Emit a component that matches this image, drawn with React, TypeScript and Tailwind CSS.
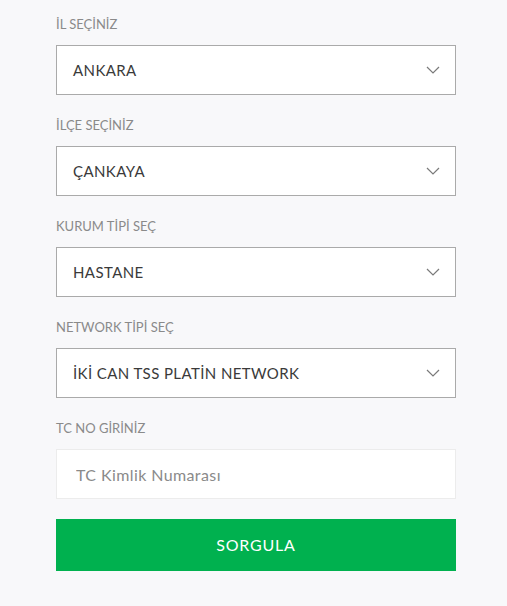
import React from "react";

const fields = [
  { label: "İL SEÇİNİZ", value: "ANKARA" },
  { label: "İLÇE SEÇİNİZ", value: "ÇANKAYA" },
  { label: "KURUM TİPİ SEÇ", value: "HASTANE" },
  { label: "NETWORK TİPİ SEÇ", value: "İKİ CAN TSS PLATİN NETWORK" },
];

function Chevron() {
  return (
    <svg width="14" height="8" viewBox="0 0 14 8" fill="none" className="shrink-0">
      <path d="M1 1l6 6 6-6" stroke="#7a7a7a" strokeWidth="1.2" />
    </svg>
  );
}

export default function App() {
  return (
    <div className="min-h-[606px] bg-[#f8f8fa] font-['Lato',sans-serif] pt-[15px]">
      <div className="w-[400px] ml-[56px] flex flex-col">
        {fields.map((f) => (
          <div key={f.label} className="flex flex-col mb-[21px]">
            <label className="text-[13px] leading-[18px] text-[#8a8a8a] mb-[12px]">{f.label}</label>
            <div className="h-[50px] bg-white border border-[#aaaaaa] flex items-center justify-between pl-[16px] pr-[15px]">
              <span className="text-[15px] tracking-[0.4px] text-[#3a3a3a]">{f.value}</span>
              <Chevron />
            </div>
          </div>
        ))}
        <div className="flex flex-col">
          <label className="text-[13px] leading-[18px] text-[#8a8a8a] mb-[12px]">TC NO GİRİNİZ</label>
          <input
            placeholder="TC Kimlik Numarası"
            className="h-[50px] bg-white border border-[#ececec] px-[19px] text-[16px] tracking-[0.4px] text-[#333] placeholder:text-[#8a8a8a] outline-none"
          />
        </div>
        <button className="mt-[20px] h-[52px] bg-[#00b14f] text-white text-[16px] tracking-[0.8px]">SORGULA</button>
      </div>
    </div>
  );
}
